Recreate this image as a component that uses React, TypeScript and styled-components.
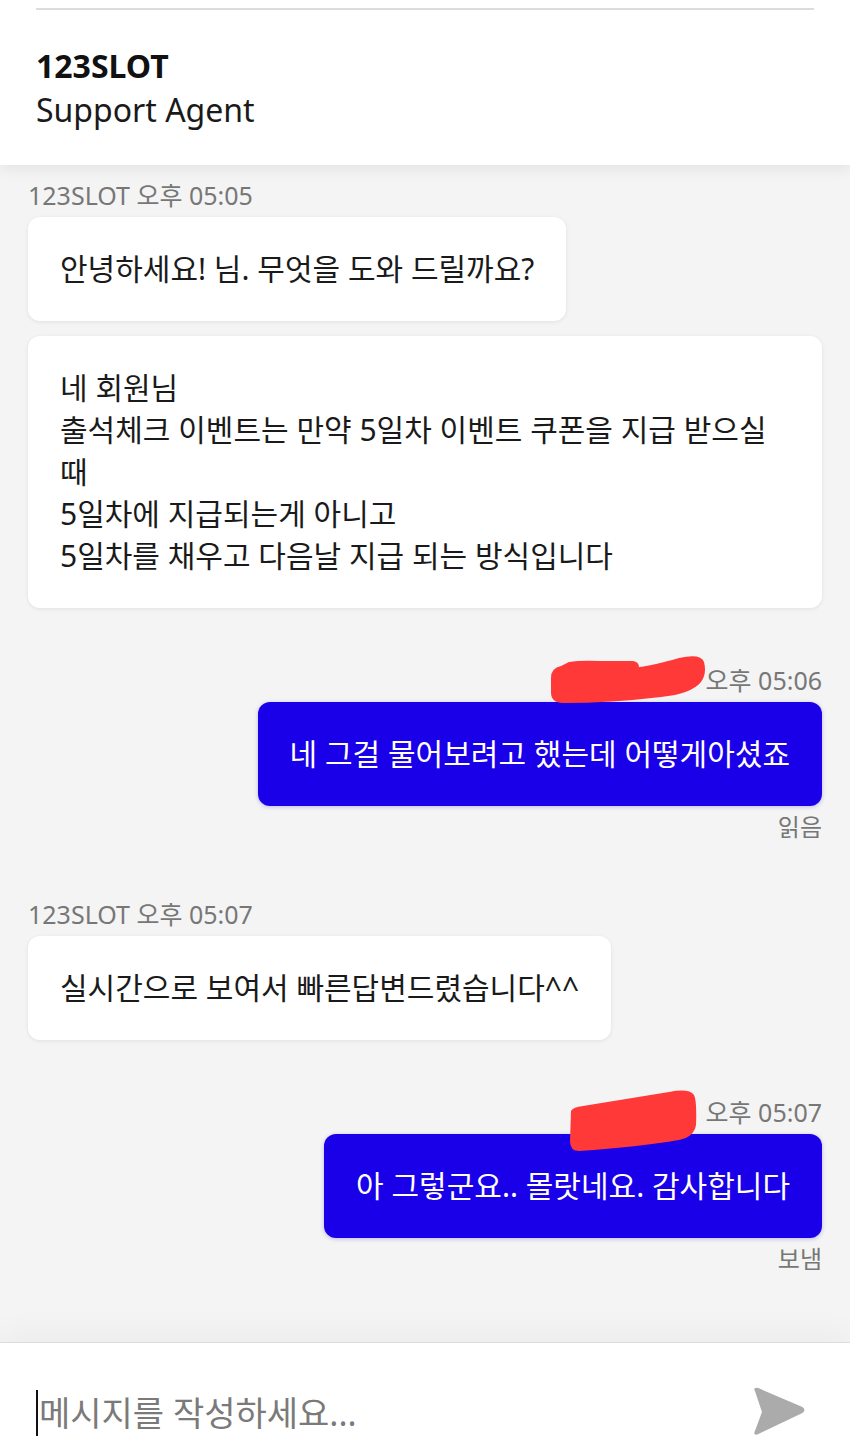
import React from "react";
import styled, { createGlobalStyle } from "styled-components";

const GlobalStyle = createGlobalStyle`
  html, body {
    margin: 0;
    padding: 0;
    background: #f4f4f4;
  }

  body {
    font-family: "Noto Sans", "Noto Sans CJK KR", sans-serif;
  }
`;

const Page = styled.div`
  display: flex;
  flex-direction: column;
  height: 100vh;
  overflow: hidden;
`;

const Header = styled.header`
  position: relative;
  z-index: 2;
  flex-shrink: 0;
  padding: 8px 36px 33px;
  background: #ffffff;
  box-shadow: 0 4px 14px rgba(0, 0, 0, 0.07);
`;

const Divider = styled.div`
  height: 2px;
  margin-bottom: 34px;
  background: #dcdcdc;
`;

const Title = styled.div`
  font-size: 32px;
  line-height: 44px;
  font-weight: 700;
  color: #111111;
`;

const Subtitle = styled.div`
  font-size: 32px;
  line-height: 44px;
  color: #1a1a1a;
`;

const ChatArea = styled.main`
  flex: 1;
  display: flex;
  flex-direction: column;
  gap: 55px;
  padding: 13px 28px 0;
  background: #f4f4f4;
`;

const Group = styled.section<{ $mine?: boolean }>`
  display: flex;
  flex-direction: column;
  align-items: ${(p) => (p.$mine ? "flex-end" : "flex-start")};
`;

const Meta = styled.div`
  display: flex;
  align-items: center;
  margin-bottom: 5px;
  font-size: 25px;
  line-height: 34px;
  color: #777777;
`;

const Redacted = styled.span<{ $w: number; $gap: number }>`
  position: relative;
  display: inline-block;
  width: ${(p) => p.$w}px;
  height: 34px;
  margin-right: ${(p) => p.$gap}px;

  svg {
    position: absolute;
    left: 0;
    z-index: 1;
  }
`;

const Bubbles = styled.div`
  display: flex;
  flex-direction: column;
  align-items: inherit;
  gap: 15px;
  max-width: 100%;
`;

const Bubble = styled.div<{ $mine?: boolean }>`
  box-sizing: border-box;
  max-width: 100%;
  padding: 31px 32px;
  border-radius: 12px;
  font-size: 30px;
  line-height: 42px;
  white-space: pre-line;
  color: ${(p) => (p.$mine ? "#ffffff" : "#1a1a1a")};
  background: ${(p) => (p.$mine ? "#1a00e8" : "#ffffff")};
  box-shadow: ${(p) =>
    p.$mine
      ? "0 1px 4px rgba(26, 0, 232, 0.25)"
      : "0 1px 4px rgba(0, 0, 0, 0.08)"};
`;

const Status = styled.div`
  margin-top: 6px;
  font-size: 24px;
  line-height: 30px;
  color: #777777;
`;

const InputBar = styled.footer`
  position: relative;
  z-index: 2;
  flex-shrink: 0;
  height: 113px;
  box-sizing: border-box;
  display: flex;
  align-items: flex-start;
  justify-content: space-between;
  padding: 46px 44px 0 36px;
  background: #ffffff;
  border-top: 1px solid #dddddd;
  box-shadow: 0 -10px 30px rgba(0, 0, 0, 0.035);
`;

const Field = styled.div`
  display: flex;
  align-items: center;
  font-size: 34px;
  line-height: 48px;
  color: #7a7a7a;
`;

const Caret = styled.span`
  width: 2px;
  height: 46px;
  margin-right: 1px;
  background: #111111;
`;

const SendButton = styled.button`
  display: flex;
  padding: 0;
  margin-top: -2px;
  border: none;
  background: none;
  cursor: pointer;
`;

const Blob1 = () => (
  <svg width="156" height="48" viewBox="0 0 156 48" style={{ top: -7 }}>
    <path
      d="M0 22 Q0 12 10 10 L18 6 Q30 4 50 5 L82 5 Q88 6 88 11 Q100 10 128 2 Q150 -3 153 6 Q156 18 150 26 Q140 38 110 41 Q60 47 12 47 Q0 47 0 36 Z"
      fill="#ff3838"
    />
  </svg>
);

const Blob2 = () => (
  <svg width="128" height="63" viewBox="0 0 128 63" style={{ top: -6 }}>
    <path
      d="M2 22 Q4 18 14 17 L100 3 Q120 -1 125 6 Q128 12 127 36 Q125 48 110 51 Q70 58 10 62 Q1 62 1 52 Z"
      fill="#ff3838"
    />
  </svg>
);

const SendIcon = () => (
  <svg width="54" height="50" viewBox="0 0 54 50">
    <path
      d="M4 4 Q2 1 6 2 L50 21 Q53 23 50 25 L6 46 Q2 48 4 44 L11 25 Z"
      fill="#ababab"
      stroke="#ababab"
      strokeWidth="2"
      strokeLinejoin="round"
    />
  </svg>
);

const App: React.FC = () => {
  return (
    <Page>
      <GlobalStyle />
      <Header>
        <Divider />
        <Title>123SLOT</Title>
        <Subtitle>Support Agent</Subtitle>
      </Header>

      <ChatArea>
        <Group>
          <Meta>123SLOT 오후 05:05</Meta>
          <Bubbles>
            <Bubble>안녕하세요! 님. 무엇을 도와 드릴까요?</Bubble>
            <Bubble>
              {"네 회원님\n출석체크 이벤트는 만약 5일차 이벤트 쿠폰을 지급 받으실 때\n5일차에 지급되는게 아니고\n5일차를 채우고 다음날 지급 되는 방식입니다"}
            </Bubble>
          </Bubbles>
        </Group>

        <Group $mine>
          <Meta>
            <Redacted $w={154} $gap={1}>
              <Blob1 />
            </Redacted>
            오후 05:06
          </Meta>
          <Bubble $mine>네 그걸 물어보려고 했는데 어떻게아셨죠</Bubble>
          <Status>읽음</Status>
        </Group>

        <Group>
          <Meta>123SLOT 오후 05:07</Meta>
          <Bubble>실시간으로 보여서 빠른답변드렸습니다^^</Bubble>
        </Group>

        <Group $mine>
          <Meta>
            <Redacted $w={127} $gap={10}>
              <Blob2 />
            </Redacted>
            오후 05:07
          </Meta>
          <Bubble $mine>아 그렇군요.. 몰랏네요. 감사합니다</Bubble>
          <Status>보냄</Status>
        </Group>
      </ChatArea>

      <InputBar>
        <Field>
          <Caret />
          메시지를 작성하세요...
        </Field>
        <SendButton type="button" aria-label="send">
          <SendIcon />
        </SendButton>
      </InputBar>
    </Page>
  );
};

export default App;
